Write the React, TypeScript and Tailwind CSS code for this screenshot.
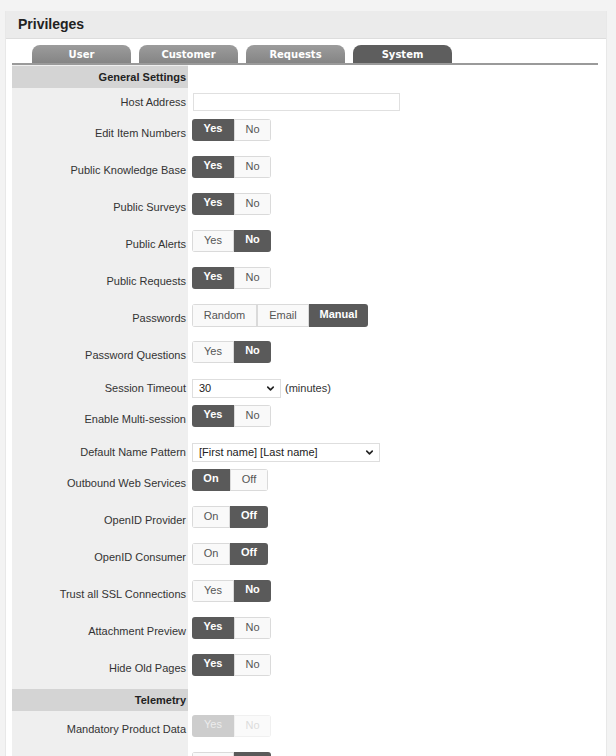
import React from 'react';
import { ChevronDown } from 'lucide-react';

type Seg = { text: string; w: string };

const yesNo: Seg[] = [
  { text: 'Yes', w: 'w-[42px]' },
  { text: 'No', w: 'w-[37px]' },
];
const onOff: Seg[] = [
  { text: 'On', w: 'w-[38px]' },
  { text: 'Off', w: 'w-[38px]' },
];
const pwd: Seg[] = [
  { text: 'Random', w: 'w-[65px]' },
  { text: 'Email', w: 'w-[52px]' },
  { text: 'Manual', w: 'w-[59px]' },
];

const Toggle: React.FC<{ opts: Seg[]; active: number; disabled?: boolean; tall?: boolean }> = ({
  opts,
  active,
  disabled,
  tall,
}) => (
  <div className={`mt-[4px] flex rounded-[3px] overflow-hidden ${tall ? 'h-[23px]' : 'h-[22px]'}`}>
    {opts.map((o, i) => {
      const on = i === active;
      let cls = '';
      if (disabled) {
        cls = on ? 'bg-[#cdcdcd] text-[#ececec]' : 'bg-[#fafafa] text-[#dcdcdc] border border-[#f0f0f0]';
      } else {
        cls = on
          ? 'bg-[#5a5a5a] text-white font-bold'
          : 'bg-[#f9f9f9] text-[#555] border border-[#dadada]';
      }
      return (
        <div
          key={o.text}
          className={`${o.w} ${cls} flex justify-center text-[11px] ${tall ? 'leading-[21px]' : 'leading-[19px]'}`}
        >
          {o.text}
        </div>
      );
    })}
  </div>
);

const Label: React.FC<{ text: string; tall?: boolean }> = ({ text, tall = true }) => (
  <div
    className={`w-[176px] shrink-0 bg-[#efefef] text-right pr-[2px] text-[11px] leading-[13px] text-[#333] ${
      tall ? 'pt-[12px]' : 'pt-[8px]'
    }`}
  >
    {text}
  </div>
);

const Row: React.FC<{ label: string; tall?: boolean; children?: React.ReactNode }> = ({
  label,
  tall = true,
  children,
}) => (
  <div className={`flex ${tall ? 'h-[37px]' : 'h-[27px]'}`}>
    <Label text={label} tall={tall} />
    <div className="pl-[4px]">{children}</div>
  </div>
);

const Header: React.FC<{ text: string; gap: string }> = ({ text, gap }) => (
  <div className="flex">
    <div className={`w-[176px] shrink-0 bg-[#efefef] ${gap}`}>
      <div className="h-[22px] bg-[#d4d4d4] text-right pr-[2px] text-[11px] font-bold leading-[22px] text-[#222]">
        {text}
      </div>
    </div>
  </div>
);

const Select: React.FC<{ value: string; w: string }> = ({ value, w }) => (
  <div
    className={`${w} mt-[5px] h-[19px] border border-[#dedede] bg-white flex items-center justify-between pl-[6px] pr-[4px] text-[11px] text-[#222]`}
  >
    <span>{value}</span>
    <ChevronDown size={11} strokeWidth={3.5} className="text-[#222]" />
  </div>
);

const tabs = [
  { name: 'User', active: false },
  { name: 'Customer', active: false },
  { name: 'Requests', active: false },
  { name: 'System', active: true },
];

export default function App() {
  const ynRows: [string, number][] = [
    ['Edit Item Numbers', 0],
    ['Public Knowledge Base', 0],
    ['Public Surveys', 0],
    ['Public Alerts', 1],
    ['Public Requests', 0],
  ];

  return (
    <div
      className="min-h-screen bg-[#f3f3f3] pt-[11px] pl-[5px] pr-[9px]"
      style={{ fontFamily: '"Liberation Sans", Arial, sans-serif' }}
    >
      <div className="bg-white border-x border-[#e8e8e8] pb-[20px]">
        {/* Title band */}
        <div className="h-[28px] bg-[#ebebeb] border-b border-[#dddddd] pl-[12px] flex items-center text-[14px] font-bold text-[#222]">
          Privileges
        </div>

        <div className="px-[6px] pt-[6px]">
          {/* Tabs */}
          <div className="flex gap-[8px] pl-[20px] border-b-2 border-[#9a9a9a] mr-[2px]">
            {tabs.map((t) => (
              <div
                key={t.name}
                className={`w-[99px] h-[18px] rounded-t-[8px] flex items-center justify-center text-white text-[10px] font-bold ${
                  t.active ? 'bg-[#5e5e5e]' : 'bg-gradient-to-b from-[#9c9c9c] to-[#858585]'
                }`}
                style={{ fontFamily: '"DejaVu Sans", Verdana, sans-serif' }}
              >
                {t.name}
              </div>
            ))}
          </div>

          <Header text="General Settings" gap="pt-[1px]" />

          <Row label="Host Address" tall={false}>
            <div className="ml-[1px] mt-[5px] w-[207px] h-[18px] border border-[#e0e0e0] bg-white" />
          </Row>

          {ynRows.map(([l, a]) => (
            <Row key={l} label={l}>
              <Toggle opts={yesNo} active={a} />
            </Row>
          ))}

          <Row label="Passwords">
            <Toggle opts={pwd} active={2} tall />
          </Row>
          <Row label="Password Questions">
            <Toggle opts={yesNo} active={1} />
          </Row>

          <Row label="Session Timeout" tall={false}>
            <div className="flex items-center gap-[4px]">
              <Select value="30" w="w-[89px]" />
              <span className="mt-[5px] text-[11px] text-[#333]">(minutes)</span>
            </div>
          </Row>
          <Row label="Enable Multi-session">
            <Toggle opts={yesNo} active={0} />
          </Row>
          <Row label="Default Name Pattern" tall={false}>
            <Select value="[First name] [Last name]" w="w-[188px]" />
          </Row>

          <Row label="Outbound Web Services">
            <Toggle opts={onOff} active={0} />
          </Row>
          <Row label="OpenID Provider">
            <Toggle opts={onOff} active={1} />
          </Row>
          <Row label="OpenID Consumer">
            <Toggle opts={onOff} active={1} />
          </Row>
          <Row label="Trust all SSL Connections">
            <Toggle opts={yesNo} active={1} />
          </Row>
          <Row label="Attachment Preview">
            <Toggle opts={yesNo} active={0} />
          </Row>
          <Row label="Hide Old Pages">
            <Toggle opts={yesNo} active={0} />
          </Row>

          <Header text="Telemetry" gap="pt-[2px]" />

          <Row label="Mandatory Product Data">
            <Toggle opts={yesNo} active={0} disabled />
          </Row>
          <Row label="">
            <Toggle opts={yesNo} active={1} />
          </Row>
        </div>
      </div>
    </div>
  );
}
